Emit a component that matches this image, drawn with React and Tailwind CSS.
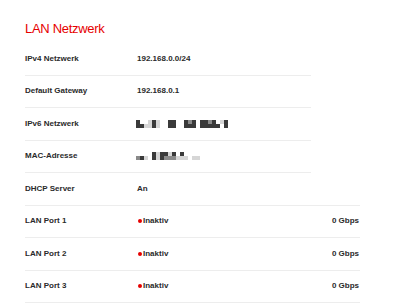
const D = "bg-[#3a3a3a]"
const M = "bg-[#8a8a8a]"
const L = "bg-[#d6d6d6]"
const W = "bg-transparent"

// pixelated (redacted) values: [top, bottom] per 4px cell
const ipv6Cells = [
  [D, D], [W, D], [W, L], [L, L], [D, D], [L, L], [W, W], [W, W],
  [D, D], [D, D], [W, W], [W, W], [D, D], [M, D], [D, D], [W, W],
  [D, D], [D, D], [M, D], [D, D], [W, D], [L, W], [D, D],
]

const macCells = [
  [W, M], [W, D], [W, L], [W, W], [D, D], [L, L], [D, D], [D, M],
  [L, M], [D, M], [W, L], [D, L], [W, L], [W, W], [W, L], [W, L],
]

function Pixelated({ cells }) {
  return (
    <div className="flex">
      {cells.map((c, i) => (
        <div key={i} className="flex flex-col">
          <div className={`w-[4px] h-[4px] ${c[0]}`} />
          <div className={`w-[4px] h-[4px] ${c[1]}`} />
        </div>
      ))}
    </div>
  )
}

function Row({ label, children, wide, speed }) {
  return (
    <div className={`flex items-center h-[32.5px] border-b border-[#ededed] ${wide ? 'w-[335px]' : 'w-[286px]'}`}>
      <div className="w-[112px] shrink-0 text-[8px] font-bold text-[#2a2a2a]">{label}</div>
      <div className="flex items-center text-[8px] font-bold text-[#2a2a2a]">{children}</div>
      {speed && <div className="ml-auto text-[8px] font-bold text-[#2a2a2a] pr-[1px]">{speed}</div>}
    </div>
  )
}

function Inaktiv() {
  return (
    <>
      <span className="w-[4px] h-[4px] rounded-full bg-[#e60000] mr-[1.5px] ml-[0.5px]" />
      Inaktiv
    </>
  )
}

export default function App() {
  return (
    <div className="w-[400px] h-[303px] overflow-hidden bg-white pl-[25px] font-['Liberation_Sans',Arial,sans-serif]">
      <div className="h-[43px] pt-[20px]">
        <h1 className="text-[13px] leading-[18px] tracking-[-0.3px] text-[#e60000]">LAN Netzwerk</h1>
      </div>

      <Row label="IPv4 Netzwerk">192.168.0.0/24</Row>
      <Row label="Default Gateway">192.168.0.1</Row>
      <Row label="IPv6 Netzwerk"><div className="-ml-[1px]"><Pixelated cells={ipv6Cells} /></div></Row>
      <Row label="MAC-Adresse"><div className="-ml-[1px]"><Pixelated cells={macCells} /></div></Row>
      <Row label="DHCP Server" wide>An</Row>
      <Row label="LAN Port 1" wide speed="0 Gbps"><Inaktiv /></Row>
      <Row label="LAN Port 2" wide speed="0 Gbps"><Inaktiv /></Row>
      <Row label="LAN Port 3" wide speed="0 Gbps"><Inaktiv /></Row>
    </div>
  )
}
